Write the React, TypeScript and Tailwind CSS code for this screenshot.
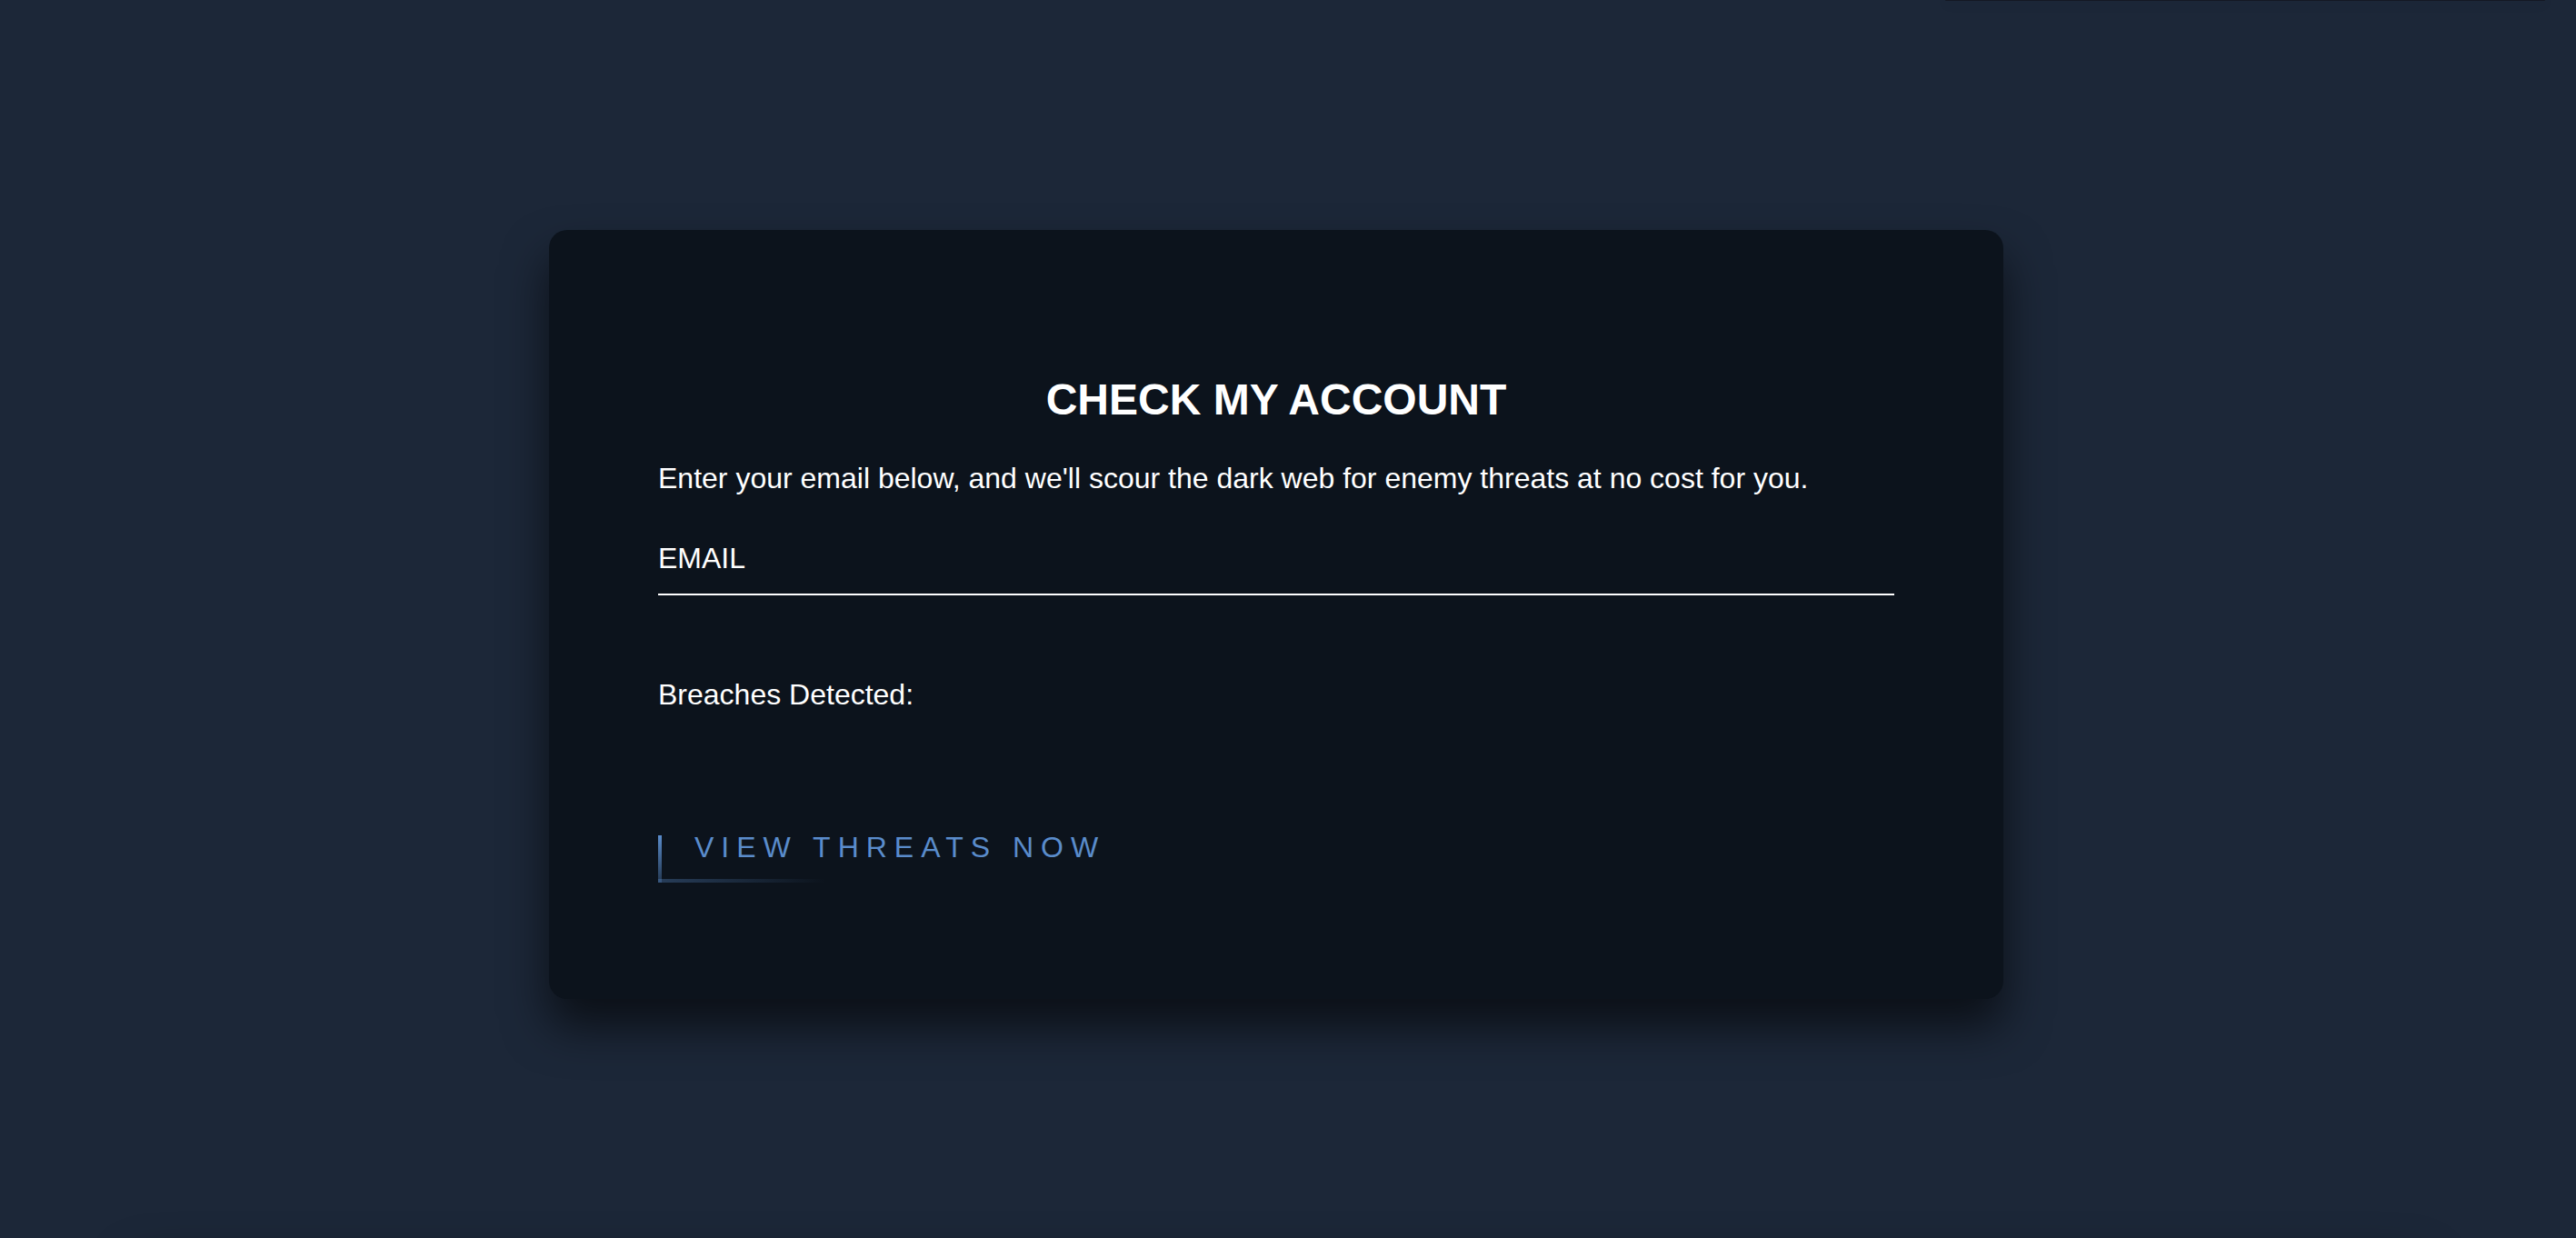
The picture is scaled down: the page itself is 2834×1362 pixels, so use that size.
export default function App() {
  return (
    <main className="relative flex min-h-screen flex-col items-center overflow-hidden bg-[#1c2738] pt-[253px] pr-[26px] font-['Liberation_Sans',Arial,sans-serif] text-[32px] leading-[36px] text-white">
      <div
        aria-hidden="true"
        className="absolute top-0 right-[34px] h-px w-[660px] rounded-b-[4px] bg-[#141823] shadow-[0_2px_12px_rgba(0,0,0,0.25)]"
      />

      <section className="w-full max-w-[1600px] rounded-[20px] bg-[#0c131c] px-[120px] pt-[159px] pb-32 shadow-[0_30px_50px_rgba(0,0,0,0.6)]">
        <form onSubmit={(event) => event.preventDefault()} className="flex flex-col gap-[132px]">
          <div className="flex flex-col gap-[91px]">
            <div className="flex flex-col gap-10">
              <h1 className="text-center text-[48px] leading-[56px] font-bold">CHECK MY ACCOUNT</h1>
              <p>
                Enter your email below, and we'll scour the dark web for enemy threats at no cost for
                you.
              </p>
              <div className="grid border-b-2 border-white pt-3 pb-[21px]">
                <label htmlFor="email" className="col-start-1 row-start-1">
                  EMAIL
                </label>
                <input
                  id="email"
                  type="email"
                  className="col-start-1 row-start-1 h-9 w-full bg-transparent outline-none"
                />
              </div>
            </div>
            <p>Breaches Detected:</p>
          </div>

          <button
            type="submit"
            className="relative self-start px-10 pb-[21px] text-left tracking-[8px] text-[#5a8ccb]"
          >
            VIEW THREATS NOW
            <span className="absolute bottom-0 left-0 h-1 w-[184px] bg-linear-to-r from-[#5a8ccb]/35 to-transparent" />
            <span className="absolute bottom-0 left-0 h-[52px] w-1 bg-linear-to-b from-[#5a8ccb] to-[#5a8ccb]/30" />
          </button>
        </form>
      </section>

      <div
        aria-hidden="true"
        className="absolute top-full right-[170px] left-[150px] h-[100px] rounded-[20px] shadow-[0_30px_50px_rgba(0,0,0,0.6)]"
      />
    </main>
  );
}
